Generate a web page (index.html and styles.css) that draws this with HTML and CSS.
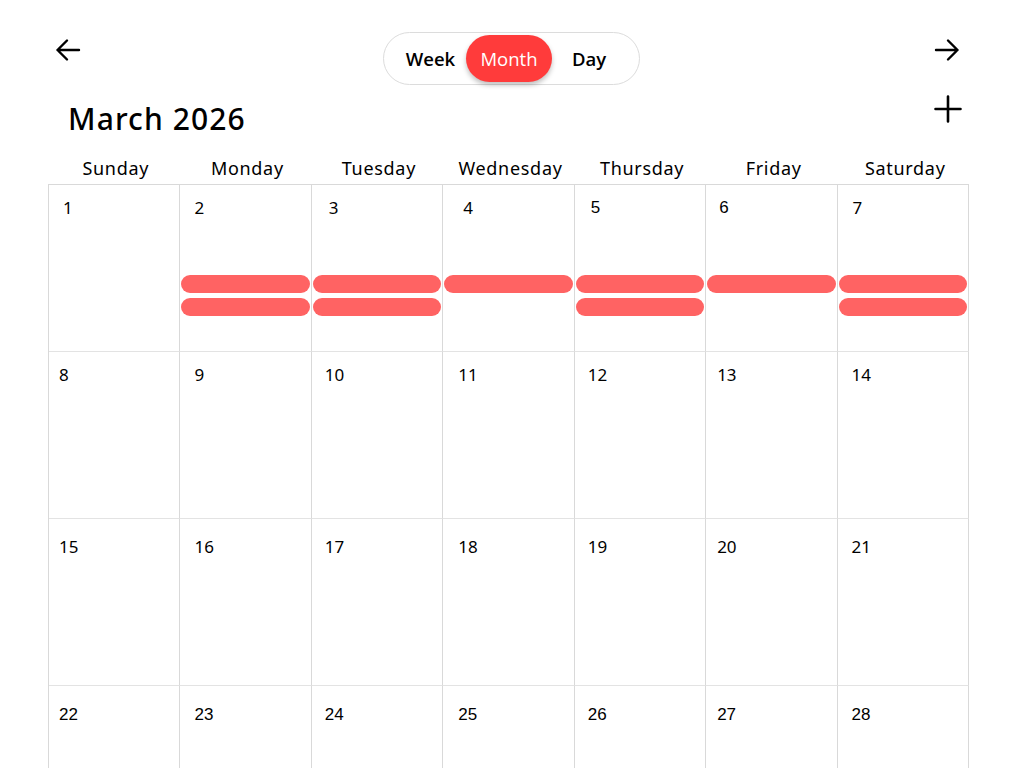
FILE: index.html
```html
<!DOCTYPE html>
<html>
<head>
<meta charset="utf-8">
<link rel="stylesheet" href="styles.css">
</head>
<body>
<div class="page">
  <div class="topbar">
    <button class="icon-btn arrow" aria-label="Previous">
      <svg width="28" height="28" viewBox="0 0 28 28" fill="none" stroke="#000" stroke-width="2.4" stroke-linecap="round" stroke-linejoin="round"><path d="M25 14H3.5M13 4.5L3.5 14L13 23.5"/></svg>
    </button>
    <div class="toggle">
      <span class="opt">Week</span>
      <span class="opt active">Month</span>
      <span class="opt">Day</span>
    </div>
    <button class="icon-btn arrow" aria-label="Next">
      <svg width="28" height="28" viewBox="0 0 28 28" fill="none" stroke="#000" stroke-width="2.4" stroke-linecap="round" stroke-linejoin="round"><path d="M3 14H24.5M15 4.5L24.5 14L15 23.5"/></svg>
    </button>
  </div>
  <div class="titlebar">
    <h1 class="title">March 2026</h1>
    <button class="icon-btn plus" aria-label="Add">
      <svg width="28" height="28" viewBox="0 0 28 28" fill="none" stroke="#000" stroke-width="2.6" stroke-linecap="round"><path d="M14 1.5V26.5M1.5 14H26.5"/></svg>
    </button>
  </div>
  <div class="weekdays">
    <div>Sunday</div><div>Monday</div><div>Tuesday</div><div>Wednesday</div><div>Thursday</div><div>Friday</div><div>Saturday</div>
  </div>
  <div class="grid">
    <div class="cell r1"><span class="num">1</span></div>
    <div class="cell r1"><span class="num">2</span><div class="events"><div class="ev"></div><div class="ev"></div></div></div>
    <div class="cell r1"><span class="num">3</span><div class="events"><div class="ev"></div><div class="ev"></div></div></div>
    <div class="cell r1"><span class="num">4</span><div class="events"><div class="ev"></div></div></div>
    <div class="cell r1"><span class="num alt">5</span><div class="events"><div class="ev"></div><div class="ev"></div></div></div>
    <div class="cell r1"><span class="num alt">6</span><div class="events"><div class="ev"></div></div></div>
    <div class="cell r1"><span class="num">7</span><div class="events"><div class="ev"></div><div class="ev"></div></div></div>

    <div class="cell"><span class="num">8</span></div>
    <div class="cell"><span class="num">9</span></div>
    <div class="cell"><span class="num">10</span></div>
    <div class="cell"><span class="num">11</span></div>
    <div class="cell"><span class="num">12</span></div>
    <div class="cell"><span class="num">13</span></div>
    <div class="cell"><span class="num">14</span></div>

    <div class="cell r3"><span class="num">15</span></div>
    <div class="cell r3"><span class="num">16</span></div>
    <div class="cell r3"><span class="num">17</span></div>
    <div class="cell r3"><span class="num">18</span></div>
    <div class="cell r3"><span class="num">19</span></div>
    <div class="cell r3"><span class="num">20</span></div>
    <div class="cell r3"><span class="num">21</span></div>

    <div class="cell r4"><span class="num alt">22</span></div>
    <div class="cell r4"><span class="num alt">23</span></div>
    <div class="cell r4"><span class="num alt">24</span></div>
    <div class="cell r4"><span class="num alt">25</span></div>
    <div class="cell r4"><span class="num alt">26</span></div>
    <div class="cell r4"><span class="num alt">27</span></div>
    <div class="cell r4"><span class="num alt">28</span></div>
  </div>
</div>
</body>
</html>
```

FILE: styles.css
```css
* { box-sizing: border-box; }
html, body { margin: 0; padding: 0; background: #fff; }
body {
  font-family: "Noto Sans", "DejaVu Sans", sans-serif;
  color: #000;
  overflow: hidden;
  height: 768px;
}
.page {
  width: 1024px;
  height: 768px;
  overflow: hidden;
  padding: 32px 55px 0 48px;
}
.topbar {
  display: flex;
  align-items: flex-start;
  justify-content: space-between;
  padding: 0 8px 0 6px;
  height: 53px;
}
.icon-btn {
  border: none;
  background: none;
  padding: 0;
  width: 28px;
  height: 28px;
  display: flex;
  align-items: center;
  justify-content: center;
  cursor: pointer;
}
.arrow { margin-top: 4px; }
.toggle {
  display: flex;
  align-items: center;
  height: 53px;
  width: 257px;
  padding: 0 3px 0 0;
  border: 1px solid #dcdcdc;
  border-radius: 27px;
  margin-left: 8px;
  font-family: "Open Sans", sans-serif;
  font-weight: 600;
  font-size: 18.5px;
}
.opt {
  display: flex;
  align-items: center;
  justify-content: center;
  height: 47px;
}
.opt:nth-child(1) { width: 82px; padding-left: 11px; }
.opt.active {
  width: 86px;
  background: #ff3b3b;
  color: #fff;
  border-radius: 24px;
  box-shadow: 0 3px 5px rgba(0,0,0,0.25);
  font-weight: 500;
}
.opt:nth-child(3) { width: 72px; padding-left: 2px; }
.titlebar {
  display: flex;
  align-items: center;
  justify-content: space-between;
  padding: 0 7px 0 20px;
  height: 70px;
  margin-top: -3px;
}
.title {
  margin: 0;
  font-size: 30px;
  font-weight: 500;
  letter-spacing: 1.1px;
  padding-top: 3px;
}
.plus { margin-top: -17px; }
.weekdays {
  display: grid;
  grid-template-columns: repeat(7, 1fr);
  width: 921px;
  height: 32px;
  align-items: center;
  text-align: center;
  font-size: 18px;
  letter-spacing: 0.7px;
}
.weekdays div { padding-left: 4px; }
.grid {
  display: grid;
  grid-template-columns: repeat(7, 1fr);
  grid-auto-rows: 167px;
  width: 921px;
  border-top: 1px solid #d9d9d9;
  border-left: 1px solid #d9d9d9;
}
.cell {
  border-right: 1px solid #d9d9d9;
  border-bottom: 1px solid #e3e3e3;
  display: flex;
  flex-direction: column;
  padding: 12px 0 0 0;
}
.num {
  font-size: 17px;
  line-height: 22px;
  padding-left: 12px;
}
.cell:nth-child(7n+1) .num { padding-left: 10px; }
.cell:nth-child(7n+2) .num { padding-left: 14px; }
.cell:nth-child(7n+3) .num { padding-left: 13px; }
.cell:nth-child(7n+4) .num { padding-left: 15px; }
.cell:nth-child(7n+5) .num { padding-left: 13px; }
.cell:nth-child(7n+6) .num { padding-left: 11px; }
.cell:nth-child(7n) .num { padding-left: 14px; }
.r1:nth-child(1) .num { padding-left: 14px; }
.r1:nth-child(3) .num { padding-left: 17px; }
.r1:nth-child(4) .num { padding-left: 20px; }
.r1:nth-child(5) .num { padding-left: 16px; }
.r1:nth-child(6) .num { padding-left: 13px; }
.r1:nth-child(7) .num { padding-left: 15px; }
.num.alt { font-family: "Liberation Sans", Arial, sans-serif; font-size: 17px; }
.events {
  margin-top: 56px;
  display: flex;
  flex-direction: column;
  gap: 5px;
  padding: 0 1px;
}
.ev {
  height: 18px;
  border-radius: 9px;
  background: #ff6363;
}
.r3 .num { padding-top: 5px; }
.r4 .num { padding-top: 6px; }
```
